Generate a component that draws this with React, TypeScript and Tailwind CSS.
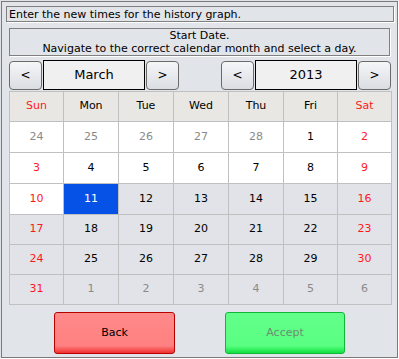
import React from 'react';

type Cell = { d: number; tone: 'other' | 'red' | 'normal'; bg: 'white' | 'gray' | 'sel' };

const DAYS = ['Sun', 'Mon', 'Tue', 'Wed', 'Thu', 'Fri', 'Sat'];
const COLS = 'grid-cols-[53px_54px_54px_54px_54px_53px_53px]';
const ROWS = 'grid-rows-[29px_30px_30px_30px_29px_29px_29px]';

// March 2013, starting from Sunday 24 Feb
function buildCells(): Cell[] {
  const cells: Cell[] = [];
  const prev = [24, 25, 26, 27, 28];
  prev.forEach((d) => cells.push({ d, tone: 'other', bg: 'white' }));
  for (let d = 1; d <= 31; d++) {
    const i = cells.length;
    const weekend = i % 7 === 0 || i % 7 === 6;
    cells.push({
      d,
      tone: weekend ? 'red' : 'normal',
      bg: d < 11 ? 'white' : d === 11 ? 'sel' : 'gray',
    });
  }
  let n = 1;
  while (cells.length < 42) cells.push({ d: n++, tone: 'other', bg: 'gray' });
  return cells;
}

function NavButton({ label }: { label: string }) {
  return (
    <button className="flex h-[29px] w-[33px] items-center justify-center rounded-[4px] border border-[#6a6a6a] bg-[linear-gradient(to_bottom,#f5f6f8,#dadde2)] text-[12px] text-black">
      {label}
    </button>
  );
}

function Picker({ value }: { value: string }) {
  return (
    <div className="flex items-center gap-[1px]">
      <NavButton label="<" />
      <div className="flex h-[30px] w-[102px] items-center justify-center border border-black bg-[#f0f0f0] text-[13px] text-black">
        {value}
      </div>
      <NavButton label=">" />
    </div>
  );
}

export default function App() {
  const cells = buildCells();

  return (
    <div
      className="h-[359px] w-[399px] border border-t-[#dfe2e7] border-l-[#dfe2e7] border-b-white border-r-white bg-[#e1e4e9]"
      style={{ fontFamily: '"DejaVu Sans", Verdana, sans-serif' }}
    >
      <div className="flex h-[357px] w-[397px] flex-col border border-[#7a7a7a] bg-[#e1e4e9]">
        {/* Instruction */}
        <div className="ml-[4px] mt-[4px] flex h-[16px] w-[388px] items-center border border-[#808080] pl-[2px] text-[11px] leading-none text-black shadow-[1px_1px_0_#fff]">
          Enter the new times for the history graph.
        </div>

        {/* Sub heading */}
        <div className="ml-[7px] mt-[6px] flex h-[28px] w-[381px] flex-col items-center justify-center border border-[#808080] text-[11px] leading-[13px] text-black shadow-[1px_1px_0_#fff]">
          <span>Start Date.</span>
          <span>Navigate to the correct calendar month and select a day.</span>
        </div>

        {/* Month / year pickers */}
        <div className="ml-[7px] mt-[4px] flex w-[382px] items-center justify-between">
          <Picker value="March" />
          <Picker value="2013" />
        </div>

        {/* Calendar */}
        <div className={`ml-[7px] mt-[1px] grid w-[383px] ${COLS} ${ROWS} gap-px bg-[#c0c0c0] p-px text-[11px]`}>
          {DAYS.map((d, i) => (
            <div
              key={d}
              className={`flex items-center justify-center bg-[#e9e7e3] ${i === 0 || i === 6 ? 'text-[#ff1a1a]' : 'text-black'}`}
            >
              {d}
            </div>
          ))}
          {cells.map((c, i) => (
            <div
              key={i}
              className={`flex items-center justify-center ${
                c.bg === 'sel' ? 'bg-[#0651e6] text-white' : c.bg === 'white' ? 'bg-white' : 'bg-[#e1e3e8]'
              } ${
                c.bg === 'sel' ? '' : c.tone === 'other' ? 'text-[#8a8a8a]' : c.tone === 'red' ? 'text-[#ff1a1a]' : 'text-black'
              }`}
            >
              {c.d}
            </div>
          ))}
        </div>

        {/* Actions */}
        <div className="mt-[7px] flex justify-center gap-[50px]">
          <button className="flex h-[42px] w-[121px] items-center justify-center rounded-[3px] border border-[#b80000] bg-[linear-gradient(to_bottom,#ff8a8a_0%,#ff8080_82%,#f03030_100%)] text-[11px] text-black">
            Back
          </button>
          <button className="flex h-[42px] w-[120px] items-center justify-center rounded-[3px] border border-[#10b838] bg-[linear-gradient(to_bottom,#62ff8a_0%,#5aff82_82%,#10e040_100%)] text-[11px] text-[#6e8c72]">
            Accept
          </button>
        </div>
      </div>
    </div>
  );
}
